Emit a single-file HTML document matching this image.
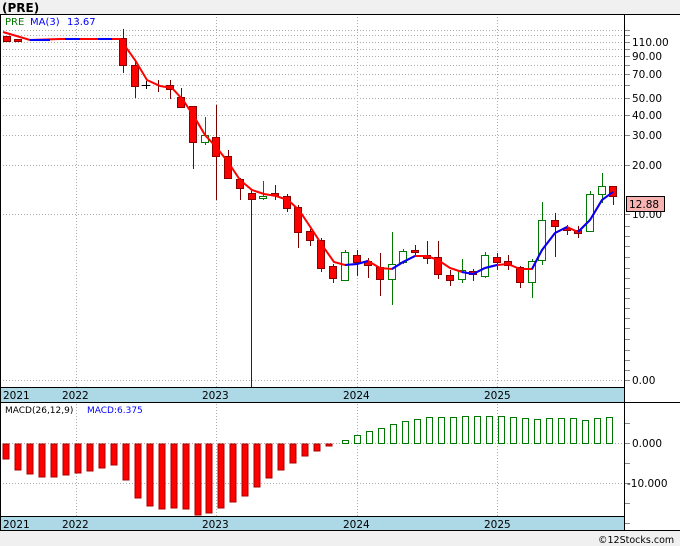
<!DOCTYPE html>
<html><head><meta charset="utf-8"><style>
body{margin:0;width:680px;height:546px;background:#f0f0f0;overflow:hidden;font-family:"DejaVu Sans",sans-serif}
svg{position:absolute;left:0;top:0}
</style></head><body>
<svg width="680" height="546" xmlns="http://www.w3.org/2000/svg" font-family="DejaVu Sans, Liberation Sans, sans-serif">
<rect x="0" y="0" width="680" height="546" fill="#f0f0f0"/>
<rect x="0" y="14" width="680" height="517" fill="#fff"/>
<text x="2" y="12" font-size="12" font-weight="bold" fill="#000">(PRE)</text>
<g stroke="#aaa" stroke-dasharray="1,2" stroke-width="1">
<line x1="0" x2="624" y1="30.5" y2="30.5"/><line x1="0" x2="624" y1="35.5" y2="35.5"/><line x1="0" x2="624" y1="42.5" y2="42.5"/><line x1="0" x2="624" y1="49.5" y2="49.5"/><line x1="0" x2="624" y1="56.5" y2="56.5"/><line x1="0" x2="624" y1="65.5" y2="65.5"/><line x1="0" x2="624" y1="74.5" y2="74.5"/><line x1="0" x2="624" y1="85.5" y2="85.5"/><line x1="0" x2="624" y1="98.5" y2="98.5"/><line x1="0" x2="624" y1="115.5" y2="115.5"/><line x1="0" x2="624" y1="135.5" y2="135.5"/><line x1="0" x2="624" y1="165.5" y2="165.5"/><line x1="0" x2="624" y1="214.5" y2="214.5"/><line x1="0" x2="624" y1="380.5" y2="380.5"/>
<line x1="76.5" x2="76.5" y1="14" y2="531"/><line x1="216.5" x2="216.5" y1="14" y2="531"/><line x1="357.5" x2="357.5" y1="14" y2="531"/><line x1="497.5" x2="497.5" y1="14" y2="531"/>
<line x1="0" x2="624" y1="443.5" y2="443.5"/><line x1="0" x2="624" y1="483.5" y2="483.5"/>
</g>
<g stroke="#888"><line x1="624" x2="630" y1="30.5" y2="30.5"/><line x1="624" x2="630" y1="35.5" y2="35.5"/><line x1="624" x2="630" y1="42.5" y2="42.5"/><line x1="624" x2="630" y1="49.5" y2="49.5"/><line x1="624" x2="630" y1="56.5" y2="56.5"/><line x1="624" x2="630" y1="65.5" y2="65.5"/><line x1="624" x2="630" y1="74.5" y2="74.5"/><line x1="624" x2="630" y1="85.5" y2="85.5"/><line x1="624" x2="630" y1="98.5" y2="98.5"/><line x1="624" x2="630" y1="115.5" y2="115.5"/><line x1="624" x2="630" y1="135.5" y2="135.5"/><line x1="624" x2="630" y1="165.5" y2="165.5"/><line x1="624" x2="630" y1="214.5" y2="214.5"/>
<line x1="624" x2="630" y1="226.5" y2="226.5"/><line x1="624" x2="630" y1="236.5" y2="236.5"/><line x1="624" x2="630" y1="246.5" y2="246.5"/><line x1="624" x2="630" y1="257.5" y2="257.5"/><line x1="624" x2="630" y1="268.5" y2="268.5"/><line x1="624" x2="630" y1="278.5" y2="278.5"/><line x1="624" x2="630" y1="288.5" y2="288.5"/><line x1="624" x2="630" y1="298.5" y2="298.5"/><line x1="624" x2="630" y1="308.5" y2="308.5"/><line x1="624" x2="630" y1="318.5" y2="318.5"/><line x1="624" x2="630" y1="328.5" y2="328.5"/><line x1="624" x2="630" y1="339.5" y2="339.5"/><line x1="624" x2="630" y1="350.5" y2="350.5"/><line x1="624" x2="630" y1="360.5" y2="360.5"/><line x1="624" x2="630" y1="370.5" y2="370.5"/><line x1="624" x2="630" y1="380.5" y2="380.5"/>
<line x1="624" x2="630" y1="423.5" y2="423.5"/><line x1="624" x2="630" y1="443.5" y2="443.5"/><line x1="624" x2="630" y1="463.5" y2="463.5"/><line x1="624" x2="630" y1="483.5" y2="483.5"/><line x1="624" x2="630" y1="503.5" y2="503.5"/><line x1="624" x2="630" y1="523.5" y2="523.5"/>
</g>
<g font-size="10.5" fill="#000">
<text x="632" y="46">110.00</text><text x="632" y="60">90.00</text><text x="632" y="78">70.00</text><text x="632" y="102">50.00</text><text x="632" y="119">40.00</text><text x="632" y="139">30.00</text><text x="632" y="169">20.00</text><text x="632" y="218">10.00</text><text x="632" y="384">0.00</text>
<text x="632" y="447">0.000</text><text x="627" y="487">-10.000</text>
</g>
<rect x="626.5" y="196.5" width="38" height="15" fill="#f7b2b2" stroke="#000"/>
<text x="629" y="208" font-size="10.5">12.88</text>
<g stroke="#700" stroke-width="1" transform="translate(0.5,0)">
<line x1="123" x2="123" y1="29" y2="73"/><line x1="135" x2="135" y1="62" y2="98"/><line x1="158" x2="158" y1="80" y2="92"/><line x1="170" x2="170" y1="80" y2="99"/><line x1="181" x2="181" y1="88" y2="108"/><line x1="193" x2="193" y1="106" y2="169"/><line x1="216" x2="216" y1="105" y2="200"/><line x1="228" x2="228" y1="150" y2="178"/><line x1="240" x2="240" y1="178" y2="200"/><line x1="251" x2="251" y1="190" y2="387"/><line x1="275" x2="275" y1="185" y2="200"/><line x1="287" x2="287" y1="194" y2="212"/><line x1="298" x2="298" y1="205" y2="248"/><line x1="310" x2="310" y1="229" y2="246"/><line x1="321" x2="321" y1="238" y2="272"/><line x1="333" x2="333" y1="264" y2="283"/><line x1="357" x2="357" y1="250" y2="276"/><line x1="368" x2="368" y1="258" y2="278"/><line x1="380" x2="380" y1="253" y2="296"/><line x1="415" x2="415" y1="245" y2="256"/><line x1="427" x2="427" y1="241" y2="264"/><line x1="438" x2="438" y1="241" y2="279"/><line x1="450" x2="450" y1="270" y2="286"/><line x1="473" x2="473" y1="269" y2="281"/><line x1="497" x2="497" y1="253" y2="270"/><line x1="508" x2="508" y1="255" y2="270"/><line x1="520" x2="520" y1="266" y2="288"/><line x1="555" x2="555" y1="213" y2="257"/><line x1="567" x2="567" y1="225" y2="235"/><line x1="578" x2="578" y1="226" y2="238"/><line x1="613" x2="613" y1="186" y2="205"/>
</g>
<g fill="#f00" stroke="#800">
<rect x="3.5" y="36.5" width="7" height="5"/><rect x="14.5" y="39.5" width="7" height="2"/>
<rect x="119.5" y="38.5" width="7" height="27"/><rect x="131.5" y="65.5" width="7" height="21"/><rect x="166.5" y="85.5" width="7" height="4"/><rect x="177.5" y="97.5" width="7" height="10"/><rect x="189.5" y="106.5" width="7" height="36"/><rect x="212.5" y="137.5" width="7" height="19"/><rect x="224.5" y="156.5" width="7" height="22"/><rect x="236.5" y="179.5" width="7" height="9"/><rect x="248.5" y="193.5" width="7" height="6"/><rect x="271.5" y="193.5" width="7" height="2"/><rect x="283.5" y="196.5" width="7" height="12"/><rect x="294.5" y="207.5" width="7" height="25"/><rect x="306.5" y="231.5" width="7" height="9"/><rect x="317.5" y="240.5" width="7" height="28"/><rect x="329.5" y="266.5" width="7" height="12"/><rect x="353.5" y="255.5" width="7" height="7"/><rect x="364.5" y="261.5" width="7" height="4"/><rect x="376.5" y="267.5" width="7" height="12"/><rect x="411.5" y="250.5" width="7" height="2"/><rect x="423.5" y="255.5" width="7" height="3"/><rect x="434.5" y="257.5" width="7" height="17"/><rect x="446.5" y="275.5" width="7" height="5"/><rect x="469.5" y="271.5" width="7" height="3"/><rect x="493.5" y="257.5" width="7" height="5"/><rect x="504.5" y="261.5" width="7" height="4"/><rect x="516.5" y="267.5" width="7" height="15"/><rect x="551.5" y="220.5" width="7" height="6"/><rect x="563.5" y="228.5" width="7" height="2"/><rect x="574.5" y="230.5" width="7" height="3"/><rect x="609.5" y="186.5" width="7" height="10"/>
</g>
<g stroke="#070" transform="translate(0.5,0)">
<line x1="205" x2="205" y1="117" y2="145"/><line x1="263" x2="263" y1="181" y2="200"/><line x1="345" x2="345" y1="250" y2="281"/><line x1="392" x2="392" y1="232" y2="305"/><line x1="403" x2="403" y1="249" y2="264"/><line x1="462" x2="462" y1="259" y2="283"/><line x1="485" x2="485" y1="252" y2="278"/><line x1="532" x2="532" y1="259" y2="298"/><line x1="542" x2="542" y1="202" y2="265"/><line x1="590" x2="590" y1="191" y2="232"/><line x1="602" x2="602" y1="173" y2="203"/>
</g>
<g stroke="#070" fill="#fff">
<rect x="201.5" y="135.5" width="7" height="7"/><rect x="259.5" y="196.5" width="7" height="2"/><rect x="341.5" y="252.5" width="7" height="28"/><rect x="388.5" y="264.5" width="7" height="15"/><rect x="399.5" y="251.5" width="7" height="11"/><rect x="458.5" y="270.5" width="7" height="9"/><rect x="481.5" y="255.5" width="7" height="21"/><rect x="528.5" y="261.5" width="7" height="21"/><rect x="538.5" y="220.5" width="7" height="40"/><rect x="586.5" y="194.5" width="7" height="37"/><rect x="598.5" y="186.5" width="7" height="8"/>
</g>
<path d="M142 85.5h8M146.5 81v8" stroke="#000"/>
<polyline fill="none" stroke="#f00" stroke-width="2" points="3,32 30,40 60,39 120,39 135,60 147,80 160,86 172,88 183,100 195,118 205,135 217,148 228,162 240,180 252,190 264,194 276,196 288,200 299,210 311,228 322,245 334,262 345,265 357,264 368,261 380,268 392,269 403,262 415,256 427,256 438,260 450,268 462,272 473,274 485,268 497,265 508,264 520,269 532,269 542,250 555,233 567,227 578,232 590,220 602,200 613,192"/>
<g fill="none" stroke="#00f" stroke-width="2">
<path d="M30,40 L50,40 M65,39 L80,39 M98,39 L112,39"/>
<polyline points="345,265 357,264 368,261"/><polyline points="392,269 403,262 415,256"/><polyline points="462,272 473,274 485,268 497,265"/><polyline points="532,269 542,250 555,233 567,227"/><polyline points="578,232 590,220 602,200 613,192"/>
</g>
<text x="5" y="25" font-size="10" fill="#070">PRE</text><text x="30" y="25" font-size="10" fill="#00f">MA(3)</text><text x="67" y="25" font-size="10" fill="#00f">13.67</text>
<rect x="0" y="387" width="624" height="15" fill="#add8e6"/>
<rect x="0" y="516" width="624" height="15" fill="#add8e6"/>
<g stroke="#000"><line x1="0" x2="680" y1="14.5" y2="14.5"/><line x1="0" x2="624" y1="387.5" y2="387.5"/><line x1="0" x2="680" y1="402.5" y2="402.5"/><line x1="0" x2="624" y1="516.5" y2="516.5"/><line x1="0" x2="680" y1="530.5" y2="530.5"/><line x1="624.5" x2="624.5" y1="14" y2="531"/><line x1="0.5" x2="0.5" y1="14" y2="531"/></g>
<g font-size="10.5" fill="#000">
<text x="3" y="399">2021</text><text x="62" y="399">2022</text><text x="202" y="399">2023</text><text x="343" y="399">2024</text><text x="484" y="399">2025</text>
<text x="3" y="528">2021</text><text x="62" y="528">2022</text><text x="202" y="528">2023</text><text x="343" y="528">2024</text><text x="484" y="528">2025</text>
</g>
<text x="5" y="413" font-size="9" fill="#000">MACD(26,12,9)</text><text x="87" y="413" font-size="9" fill="#00f">MACD:6.375</text>
<g fill="#f00" stroke="#a00">
<rect x="3" y="444" width="6" height="15"/><rect x="15" y="444" width="6" height="26"/><rect x="27" y="444" width="6" height="30"/><rect x="39" y="444" width="6" height="33"/><rect x="51" y="444" width="6" height="33"/><rect x="63" y="444" width="6" height="31"/><rect x="75" y="444" width="6" height="29"/><rect x="87" y="444" width="6" height="27"/><rect x="99" y="444" width="6" height="24"/><rect x="111" y="444" width="6" height="21"/><rect x="123" y="444" width="6" height="36"/><rect x="135" y="444" width="6" height="54"/><rect x="147" y="444" width="6" height="62"/><rect x="159" y="444" width="6" height="65"/><rect x="171" y="444" width="6" height="64"/><rect x="183" y="444" width="6" height="65"/><rect x="195" y="444" width="6" height="71"/><rect x="206" y="444" width="6" height="69"/><rect x="218" y="444" width="6" height="64"/><rect x="230" y="444" width="6" height="58"/><rect x="242" y="444" width="6" height="52"/><rect x="254" y="444" width="6" height="43"/><rect x="266" y="444" width="6" height="34"/><rect x="278" y="444" width="6" height="26"/><rect x="290" y="444" width="6" height="19"/><rect x="302" y="444" width="6" height="12"/><rect x="314" y="444" width="6" height="7"/><rect x="326" y="444" width="6" height="2"/>
</g>
<g fill="#fff" stroke="#070">
<rect x="342.5" y="440.5" width="6" height="3"/><rect x="354.5" y="435.5" width="6" height="8"/><rect x="366.5" y="431.5" width="6" height="12"/><rect x="378.5" y="428.5" width="6" height="15"/><rect x="390.5" y="424.5" width="6" height="19"/><rect x="402.5" y="421.5" width="6" height="22"/><rect x="414.5" y="419.5" width="6" height="24"/><rect x="426.5" y="417.5" width="6" height="26"/><rect x="438.5" y="417.5" width="6" height="26"/><rect x="450.5" y="417.5" width="6" height="26"/><rect x="462.5" y="416.5" width="6" height="27"/><rect x="474.5" y="416.5" width="6" height="27"/><rect x="486.5" y="416.5" width="6" height="27"/><rect x="498.5" y="416.5" width="6" height="27"/><rect x="510.5" y="417.5" width="6" height="26"/><rect x="522.5" y="418.5" width="6" height="25"/><rect x="534.5" y="419.5" width="6" height="24"/><rect x="546.5" y="418.5" width="6" height="25"/><rect x="558.5" y="418.5" width="6" height="25"/><rect x="570.5" y="418.5" width="6" height="25"/><rect x="582.5" y="420.5" width="6" height="23"/><rect x="594.5" y="418.5" width="6" height="25"/><rect x="606.5" y="417.5" width="6" height="26"/>
</g>
<text x="598" y="543" font-size="9.5" fill="#000">©12Stocks.com</text>
</svg>
</body></html>
